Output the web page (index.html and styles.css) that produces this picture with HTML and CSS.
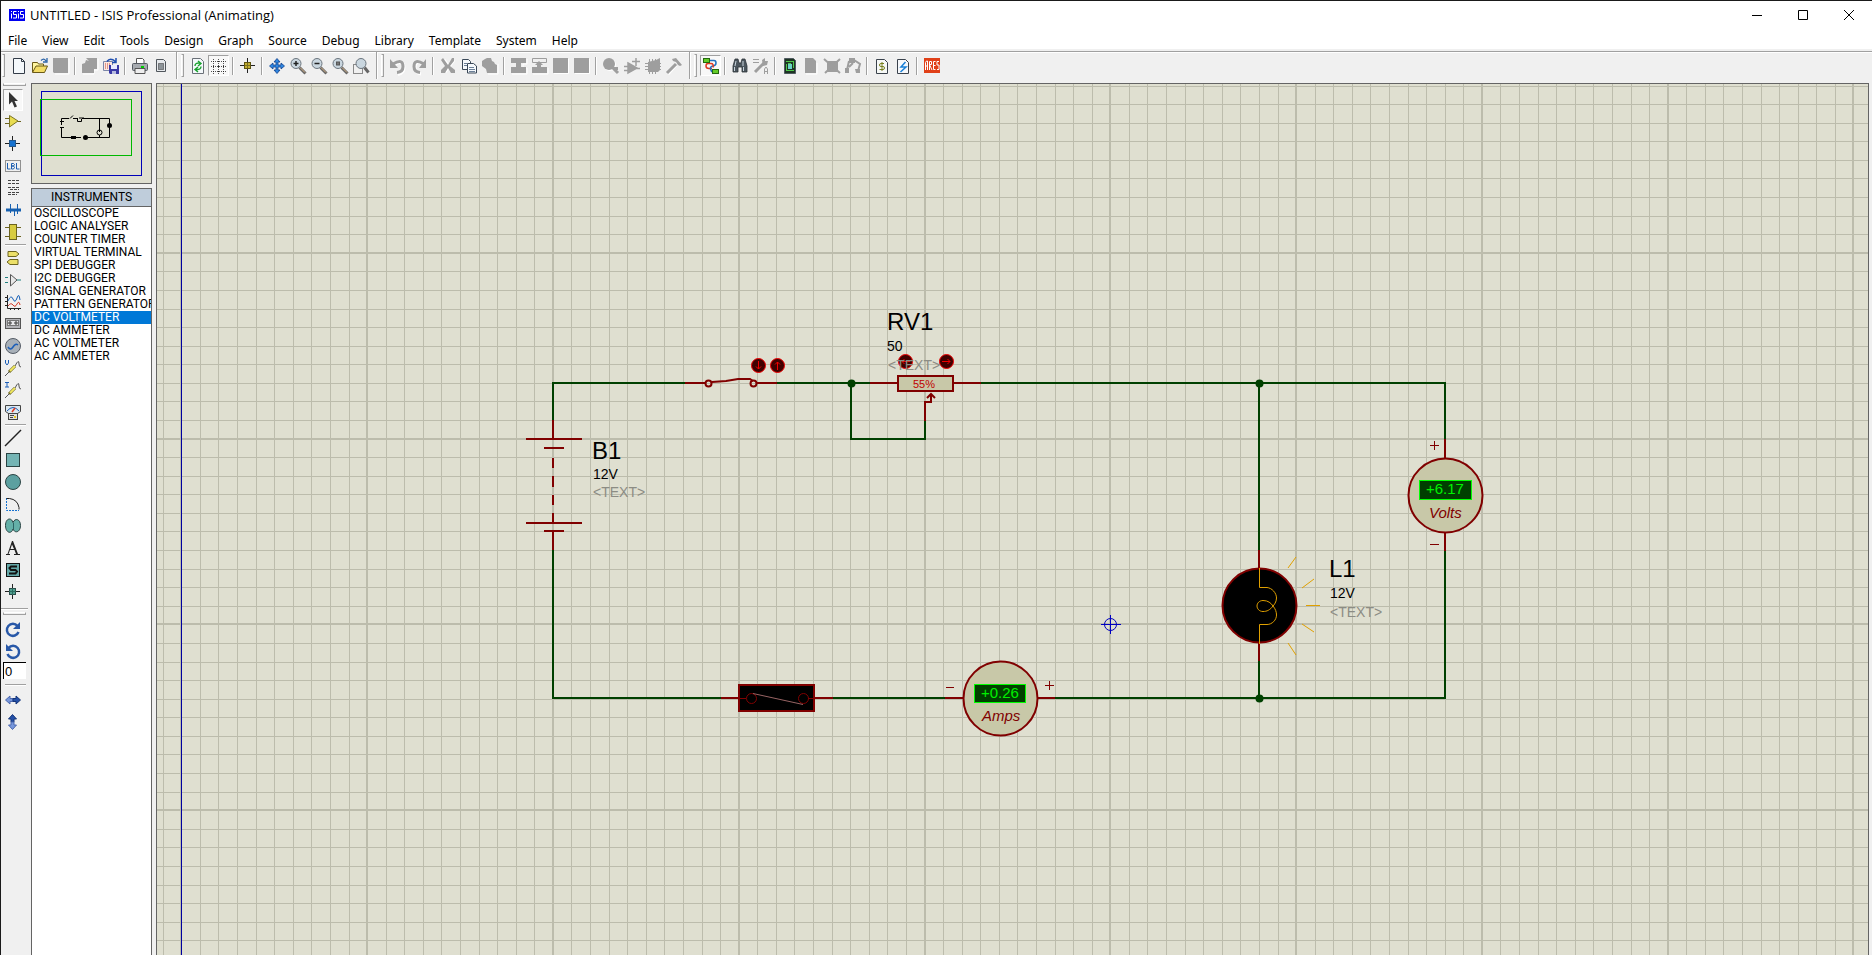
FILE: index.html
```html
<!DOCTYPE html>
<html lang="en">
<head>
<meta charset="utf-8">
<title>UNTITLED - ISIS Professional (Animating)</title>
<link rel="stylesheet" href="styles.css">
</head>
<body>
<div class="window">
<header class="titlebar">
  <svg class="app-icon" width="16" height="12" viewBox="0 0 16 12" aria-hidden="true"><rect width="16" height="12" fill="#0000f0"/><path d="M2.500 2v1M2.500 4.500v5M7.500 2.500H4.500v3h3v3.500H4M9.500 2v1M9.500 4.500v5M14.500 2.500H11.500v3h3v3.500H11" stroke="#fff" fill="none"/></svg>
  <h1 class="title">UNTITLED - ISIS Professional (Animating)</h1>
  <div class="win-controls">
    <button aria-label="Minimize"><svg width="12" height="12"><path d="M1 6.500h10" stroke="#000"/></svg></button>
    <button aria-label="Maximize"><svg width="12" height="12"><path d="M1.500 1.500h9v9h-9z" stroke="#000" fill="none"/></svg></button>
    <button aria-label="Close"><svg width="12" height="12"><path d="M1 1l10 10M11 1L1 11" stroke="#000"/></svg></button>
  </div>
</header>
<nav class="menubar">
  <button>File</button><button>View</button><button>Edit</button><button>Tools</button><button>Design</button><button>Graph</button><button>Source</button><button>Debug</button><button>Library</button><button>Template</button><button>System</button><button>Help</button>
</nav>
<div class="toolbar" role="toolbar" aria-label="Main">
  <span class="grip"></span>
  <button aria-label="New"><svg viewBox="0 0 16 16"><path d="M2.500.5h8l3 3v12h-11z" fill="#f4f8fb" stroke="#333c48"/><path d="M10.500.5v3h3" fill="none" stroke="#333c48"/></svg></button>
  <button aria-label="Open"><svg viewBox="0 0 16 16"><path d="M.5 14V4.500h5l1 1.500h5v2" fill="#fff6a0" stroke="#6b5a18"/><path d="M.5 14.500L4 8h11.500l-3 6.500z" fill="#f3dc66" stroke="#6b5a18"/><path d="M9 2.500q3-3 5 .5M15 0v4h-4" fill="none" stroke="#2c64a8" stroke-width="1.300"/></svg></button>
  <button aria-label="Save" disabled><svg viewBox="0 0 16 16"><path d="M16 1v15H2" stroke="#fff" fill="none"/><path d="M0 0h15v15H1L0 14z" fill="#9e9e9e"/></svg></button>
  <span class="sep"></span>
  <button aria-label="Import section" disabled><svg viewBox="0 0 16 16"><path d="M16 1v11h-4v4H1" fill="none" stroke="#fff"/><path d="M4 0h11v11h-3v4H0V6l3-1 1-3 3 1z" fill="#9e9e9e"/></svg></button>
  <button aria-label="Export section"><svg viewBox="0 0 16 16"><path d="M.5 3.500h9v9h-9z" fill="#fde8e0" stroke="#7c86a8"/><path d="M2 6h6M2 8h6M2 10h6" stroke="#c44634" stroke-dasharray="1 1"/><path d="M4 3.500Q7-1 12.500 3.500M13 0v4.500H9" fill="none" stroke="#1f4fb0" stroke-width="1.500"/><path d="M6 7h10v9H7l-1-1z" fill="#3a39a6"/><path d="M8 7h6v4H8z" fill="#e8ecff"/><path d="M9 13h4v3H9z" fill="#b8bce0"/></svg></button>
  <span class="sep"></span>
  <button aria-label="Print"><svg viewBox="0 0 16 16"><path d="M4.500 6V.5h6l1.500 1.500v4" fill="#fff" stroke="#555"/><rect x=".5" y="5.500" width="15" height="7" rx="1" fill="#a7abb0" stroke="#555b62"/><path d="M3 10.500h10v5H3z" fill="#eee" stroke="#555"/><path d="M9 8h3v2H9z" fill="#0c0"/></svg></button>
  <button aria-label="Print area"><svg viewBox="0 0 16 16"><path d="M3.500 1.500h7l2 2v10h-9z" fill="#e6e9ec" stroke="#50565c"/><rect x="5.500" y="5.500" width="5" height="6" fill="#8d9499" stroke="#333" stroke-dasharray="1 1"/></svg></button>
  <span class="rule"></span><span class="grip"></span>
  <button aria-label="Redraw"><svg viewBox="0 0 16 16"><path d="M2.500.5h8l3 3v12h-11z" fill="#f4f8fb" stroke="#6a7078"/><path d="M5 8q0-3.500 5-3M8 3l3 2.500L8 8M11 8.500q0 3.500-5 3M8 9l-3 2.500L8 14" fill="none" stroke="#17a02c" stroke-width="1.400"/></svg></button>
  <button class="pressed" aria-label="Toggle grid" aria-pressed="true"><svg viewBox="0 0 16 16"><path d="M2.500 1v15M7.500 1v15M12.500 1v15M0 3.500h16M0 8.500h16M0 13.500h16" stroke="#555" stroke-dasharray="1 1"/><path d="M2 3.500h1M7 3.500h1M12 3.500h1M2 8.500h1M7 8.500h1M12 8.500h1M2 13.500h1M7 13.500h1M12 13.500h1" stroke="#222"/></svg></button>
  <span class="sep"></span>
  <button aria-label="Origin"><svg viewBox="0 0 16 16"><path d="M7.500 0v15M0 7.500h15" stroke="#222"/><rect x="4.500" y="4.500" width="6" height="6" fill="#c4b030" stroke="#5e5410"/><path d="M7.500 5v5M5 7.500h5" stroke="#7c7020"/></svg></button>
  <span class="sep"></span>
  <button aria-label="Pan"><svg viewBox="0 0 16 16"><path d="M8 .5l3 3.500H9v3h3V5l3.500 3-3.500 3V9H9v3h2l-3 3.500L5 12h2V9H4v2L.5 8 4 5v2h3V4H5z" fill="#2f86e0" stroke="#10408c" stroke-width=".8"/></svg></button>
  <button aria-label="Zoom in"><svg viewBox="0 0 16 16"><path d="M9.500 9.500l6 6" stroke="#666" stroke-width="3"/><path d="M10 9.500l5 5" stroke="#d8b488"/><circle cx="6" cy="5.500" r="5" fill="#c9d6df" stroke="#6b757e"/><path d="M3.500 5.500h5M6 3v5" stroke="#222" stroke-width="1.500"/></svg></button>
  <button aria-label="Zoom out"><svg viewBox="0 0 16 16"><path d="M9.500 9.500l6 6" stroke="#666" stroke-width="3"/><path d="M10 9.500l5 5" stroke="#d8b488"/><circle cx="6" cy="5.500" r="5" fill="#c9d6df" stroke="#6b757e"/><path d="M3.500 5.500h5" stroke="#222" stroke-width="1.500"/></svg></button>
  <button aria-label="Zoom all"><svg viewBox="0 0 16 16"><path d="M9.500 9.500l6 6" stroke="#666" stroke-width="3"/><path d="M10 9.500l5 5" stroke="#d8b488"/><circle cx="6" cy="5.500" r="5" fill="#c9d6df" stroke="#6b757e"/><rect x="4.500" y="4" width="3" height="3" fill="#777" stroke="#555"/></svg></button>
  <button aria-label="Zoom area"><svg viewBox="0 0 16 16"><path d="M.5 6.500v9h9v-9z" fill="none" stroke="#222" stroke-dasharray="1 1"/><path d="M11.500 9.500l4 5" stroke="#666" stroke-width="3"/><circle cx="8" cy="5.500" r="5" fill="#c9d6df" stroke="#6b757e"/></svg></button>
  <span class="rule"></span><span class="grip"></span>
  <button aria-label="Undo" disabled><svg viewBox="0 0 16 16"><path d="M3 6q10-6 10 2.500Q13 14 7 15.500" fill="none" stroke="#fff" stroke-width="3" transform="translate(1 1)"/><path d="M3 6q10-6 10 2.500Q13 14 7 14.500" fill="none" stroke="#9e9e9e" stroke-width="3"/><path d="M0 1v9h8z" fill="#9e9e9e"/></svg></button>
  <button aria-label="Redo" disabled><svg viewBox="0 0 16 16"><path d="M13 6Q3 0 3 8.500 3 14 9 15" fill="none" stroke="#fff" stroke-width="3" transform="translate(1 1)"/><path d="M13 6Q3 0 3 8.500 3 14 9 14.500" fill="none" stroke="#9e9e9e" stroke-width="3"/><path d="M15 1v9H8z" fill="#9e9e9e"/></svg></button>
  <span class="sep"></span>
  <button aria-label="Cut" disabled><svg viewBox="0 0 16 16"><path d="M4 2l9 12M14 2L5 14" stroke="#fff" stroke-width="3"/><path d="M3 0l5 7 4-7h2v3l-4 5 5 4v3h-4l-3-5-3 5H1v-3l4-4-4-6z" fill="#9e9e9e"/></svg></button>
  <button aria-label="Copy"><svg viewBox="0 0 16 16"><path d="M1.500 1.500h6l2 2v8h-8z" fill="#f6f9fc" stroke="#3a4858"/><path d="M6.500 5.500h6l3 2.500v7h-9z" fill="#f6f9fc" stroke="#3a4858"/><path d="M3 5.500h3M3 7.500h3M8 9.500h5M8 11.500h6M8 13.500h6" stroke="#6c8098"/></svg></button>
  <button aria-label="Paste" disabled><svg viewBox="0 0 16 16"><path d="M16 6v10H6" fill="none" stroke="#fff"/><path d="M0 3l3-2 2-1h4l1 3 2 1 1 2 2 1v8H5l-1-4-4-3z" fill="#9e9e9e"/></svg></button>
  <span class="sep"></span>
  <button aria-label="Block copy" disabled><svg viewBox="0 0 16 16"><path d="M16 1v5h-4v4h4v6H1" fill="none" stroke="#fff"/><path d="M0 0h15v5h-5v4h5v6H0V9h5V5H0z" fill="#9e9e9e"/></svg></button>
  <button aria-label="Block move" disabled><svg viewBox="0 0 16 16"><path d="M16 10v6H1" fill="none" stroke="#fff"/><path d="M.5.5h14v4H.5z" fill="none" stroke="#9e9e9e"/><path d="M7 3l4 4H9v2h6v6H0V9h5V7H3z" fill="#9e9e9e"/></svg></button>
  <button aria-label="Block rotate" disabled><svg viewBox="0 0 16 16"><path d="M15.500 1v14.500H1" fill="none" stroke="#fff"/><path d="M0 0h15v15H0z" fill="#9e9e9e"/></svg></button>
  <button aria-label="Block delete" disabled><svg viewBox="0 0 16 16"><path d="M15.500 1v14.500H1" fill="none" stroke="#fff"/><path d="M0 0h15v15H0z" fill="#9e9e9e"/></svg></button>
  <span class="sep"></span>
  <button aria-label="Pick parts" disabled><svg viewBox="0 0 16 16"><circle cx="7" cy="7" r="6" fill="#fff"/><circle cx="6" cy="6" r="6" fill="#9e9e9e"/><path d="M9 9l6 6M11 10.500h4" stroke="#9e9e9e" stroke-width="3"/></svg></button>
  <button aria-label="Make device" disabled><svg viewBox="0 0 16 16"><path d="M4 5l9 5-9 5zM0 8.500h4M0 12.500h4M11 10.500h5M8 3.500h8M12 0v8" fill="#9e9e9e" stroke="#9e9e9e" stroke-width="1.500"/></svg></button>
  <button aria-label="Packaging tool" disabled><svg viewBox="0 0 16 16"><path d="M3 4l8-2 4-2v12l-2 2H3z" fill="#9e9e9e"/><path d="M0 5.500h16M0 8.500h16M0 11.500h16M4.500 1v15M7.500 1v15M10.500 1v15" stroke="#9e9e9e"/></svg></button>
  <button aria-label="Decompose" disabled><svg viewBox="0 0 16 16"><path d="M1 15L9 6" stroke="#fff" stroke-width="3" transform="translate(1 1)"/><path d="M1 15L10 6" stroke="#9e9e9e" stroke-width="3"/><path d="M6 1l4-1 6 7-2 1-2-1-2-3-3-1z" fill="#9e9e9e"/></svg></button>
  <span class="rule"></span><span class="grip"></span>
  <button class="pressed" aria-label="Wire autorouter" aria-pressed="true"><svg viewBox="0 0 16 16"><path d="M8 5.500H5q-2 0-2 2.500t3 2.500h3" fill="none" stroke="#e03820" stroke-width="1.500"/><path d="M7 2.500h4q2 0 2 2.500T10 8 7.500 11t2.500 3" fill="none" stroke="#2070c0" stroke-width="1.500"/><path d="M8 5.500q3 0 2 4" fill="none" stroke="#e03820" stroke-width="1.500"/><rect x=".5" y=".5" width="6" height="4" fill="#64cc28" stroke="#246810"/><rect x="9.500" y="11.500" width="6" height="4" fill="#64cc28" stroke="#246810"/></svg></button>
  <span class="sep"></span>
  <button aria-label="Search"><svg viewBox="0 0 16 16"><path d="M3 1h3l1 4h2l1-4h3l2 7v6h-5V9H6v5H1V8z" fill="#4c565e" stroke="#2c3238" stroke-width=".8"/><path d="M2.500 9v4M11.500 9v4M4 3L3 8M11 3v5" stroke="#c8d4dc"/></svg></button>
  <button aria-label="Property tool"><svg viewBox="0 0 16 16"><path d="M0 1.500h6M0 4.500h6" stroke="#9e9e9e"/><path d="M2 14L11 5" stroke="#9e9e9e" stroke-width="3"/><path d="M9 2l3-2v3h3l-1 4-4 1z" fill="#9e9e9e"/><path d="M11.500 16v-5l1.500-2 1.500 2v5M11.500 13.500h3" fill="none" stroke="#9e9e9e"/></svg></button>
  <span class="sep"></span>
  <button aria-label="New sheet"><svg viewBox="0 0 16 16"><path d="M2.500.5h9l2 2v13h-11z" fill="#1d3424" stroke="#505a60"/><path d="M4 3.500h8M4 12.500h8M4.500 6v6M11.500 4v6M6 5.500h3" stroke="#50c84c"/><rect x="6" y="6" width="4" height="5" fill="#6bd4c8"/></svg></button>
  <button aria-label="Remove sheet" disabled><svg viewBox="0 0 16 16"><path d="M14 5v11H3" fill="none" stroke="#fff"/><path d="M2 0h8l3 3v12H2z" fill="#9e9e9e"/></svg></button>
  <button aria-label="Parent sheet" disabled><svg viewBox="0 0 16 16"><path d="M3 3h11v11H3z" fill="#9e9e9e"/><path d="M0 1l16 14M16 1L1 15" stroke="#9e9e9e" stroke-width="2"/></svg></button>
  <button aria-label="Child sheet" disabled><svg viewBox="0 0 16 16"><path d="M4 0h6v5H4zM0 10h4v5H0zM10 11h5v4h-4z" fill="#9e9e9e"/><path d="M4 3L2 12M9 2l6 4-2 7M8 5L4 9" fill="none" stroke="#9e9e9e" stroke-width="2"/></svg></button>
  <span class="sep"></span>
  <button aria-label="Bill of materials"><svg viewBox="0 0 16 16"><path d="M2.500 1.500h8l3 3v11h-11z" fill="#f6f8f6" stroke="#3a424c"/><path d="M10 5.500H7q-1.500 0-1.500 1.500T7 8.500h2q1.500 0 1.500 1.500T9 11.500H5.500M8 4v9" fill="none" stroke="#788020"/></svg></button>
  <button aria-label="Electrical check"><svg viewBox="0 0 16 16"><path d="M2.500 1.500h8l3 3v11h-11z" fill="#f6f8fb" stroke="#3a424c"/><path d="M10.500 4L6 9h5l-5.500 5" fill="none" stroke="#1a80d8" stroke-width="1.500"/></svg></button>
  <span class="sep"></span>
  <button aria-label="ARES"><svg viewBox="0 0 16 16"><rect width="16" height="15" fill="#e04018"/><path d="M1.500 12V4.500L2.500 3h1v9M2 8h2M5.500 12V3.500h2v3h-2L8 12M11.500 3.500h-2V11.500h2M9.500 7.500h2M15 3.500h-2v3.500h2v4.500h-2" stroke="#fff" fill="none"/></svg></button>
</div>
<main class="workspace">
  <aside class="modes" role="toolbar" aria-label="Modes">
    <span class="hgrip"></span>
    <button class="pressed" aria-label="Selection mode" aria-pressed="true"><svg viewBox="0 0 16 16"><path d="M4 0v12.500l3-3 2.500 6 2.500-1-2.500-5.500H13z" fill="#333"/></svg></button>
    <button aria-label="Component mode"><svg viewBox="0 0 16 16"><path d="M0 4.500h4M0 9.500h4M12 7.500h4" stroke="#6c6420"/><path d="M4.500 1.500L13 7l-8.500 6z" fill="#e8dc50" stroke="#7c7424"/></svg></button>
    <button aria-label="Junction mode"><svg viewBox="0 0 16 16"><path d="M7.500 0v15M0 7.500h15" stroke="#222"/><rect x="4.500" y="4.500" width="6" height="6" fill="#1672d0" stroke="#24588c"/></svg></button>
    <button aria-label="Label mode"><svg viewBox="0 0 16 16"><rect x=".5" y="2.500" width="15" height="11" fill="none" stroke="#333" stroke-dasharray="1 1"/><path d="M2.500 5v6h3M6.500 5.500v5.500h2l1-1.500-1-1.500h-2 2l1-1.500-1-1h-2M11.500 5v6h3" stroke="#1c5eb0" fill="none"/></svg></button>
    <button aria-label="Script mode"><svg viewBox="0 0 16 16"><path d="M3 .5h11M3 3.500h11M3 7.500h11M5 9.500h9M3 12.500h11M3 14.500h9" stroke="#444" stroke-dasharray="3 1"/></svg></button>
    <button aria-label="Bus mode"><svg viewBox="0 0 16 16"><path d="M1 8h15" stroke="#1660b0" stroke-width="3"/><path d="M5.500 2v6M9.500 8v6M12.500 2v10M5.500 8v3" stroke="#1660b0"/></svg></button>
    <button aria-label="Subcircuit mode"><svg viewBox="0 0 16 16"><path d="M0 3.500h5M0 12.500h5M11 3.500h5M11 12.500h5" stroke="#6c6420"/><rect x="4.500" y=".5" width="7" height="15" fill="#d8cc40" stroke="#6c6420"/></svg></button>
    <span class="hsep"></span>
    <button aria-label="Terminals mode"><svg viewBox="0 0 16 16"><path d="M3 1.500h8L14 4l-3 2.500H3z" fill="#ece068" stroke="#6c6420"/><path d="M13 9.500H5L2 12l3 2.500h8z" fill="#ece068" stroke="#6c6420"/></svg></button>
    <button aria-label="Device pins mode"><svg viewBox="0 0 16 16"><path d="M0 5.500h3M0 10.500h3M12 8h4" stroke="#208080"/><path d="M5.500 2.500L12 8l-6.500 6z" fill="#e8e8e8" stroke="#555"/></svg></button>
    <button aria-label="Graph mode"><svg viewBox="0 0 16 16"><path d="M2.500 1v13.500H16M0 3.500h2M0 7.500h2M0 11.500h2M5.500 14v2M9.500 14v2M13.500 14v2" stroke="#222" fill="none"/><path d="M3 7q3-7 5-2t4-1 3 2" fill="none" stroke="#1660b8"/><path d="M3 12q3-4 5-1t4-1 3 1" fill="none" stroke="#d03828"/></svg></button>
    <button aria-label="Tape recorder mode"><svg viewBox="0 0 16 16"><rect x=".5" y="2.500" width="15" height="10" fill="#b4b4b8" stroke="#555"/><rect x="2.500" y="4.500" width="11" height="5" fill="#e8e8ea" stroke="#777"/><path d="M4 6h2v2H4zM10 6h2v2h-2z" fill="#fff" stroke="#333"/></svg></button>
    <button aria-label="Generator mode"><svg viewBox="0 0 16 16"><circle cx="8" cy="8" r="7.500" fill="#a8b0b8" stroke="#555c66"/><path d="M3 9q2.500 4 5 0t5-2" fill="none" stroke="#1c5eb8" stroke-width="1.500"/></svg></button>
    <button aria-label="Voltage probe mode"><svg viewBox="0 0 16 16"><path d="M.5 0v3l1.500 2 1.500-2V0" stroke="#1c5eb8" fill="none"/><path d="M0 16l5-5" stroke="#555"/><path d="M4 12l6-6" stroke="#6c6420" stroke-width="3"/><path d="M5 11l5-5" stroke="#f0e860" stroke-width="2"/><path d="M10 6q4-8 4-2 0 3 2 3" fill="none" stroke="#555"/></svg></button>
    <button aria-label="Current probe mode"><svg viewBox="0 0 16 16"><path d="M0 .5h4M2 .5v4.500M0 5h4" stroke="#1c5eb8" fill="none"/><path d="M0 16l5-5" stroke="#555"/><path d="M4 12l6-6" stroke="#6c6420" stroke-width="3"/><path d="M5 11l5-5" stroke="#f0e860" stroke-width="2"/><path d="M10 6q4-8 4-2 0 3 2 3" fill="none" stroke="#555"/></svg></button>
    <button aria-label="Instruments mode"><svg viewBox="0 0 16 16"><path d="M.5 1.500h15v6l-3 2h-9l-3-2z" fill="#dce8f0" stroke="#444"/><path d="M2 7q6-7 12 0" fill="none" stroke="#1c5eb8"/><path d="M7 8l3-4" stroke="#e03820" stroke-width="1.500"/><rect x="3.500" y="9.500" width="9" height="6" fill="#e0e0e0" stroke="#444"/><path d="M5 11.500h4M5 13.500h3" stroke="#444"/><path d="M9 12h2v2H9z" fill="#e8c820"/></svg></button>
    <span class="hsep"></span>
    <button aria-label="Line"><svg viewBox="0 0 16 16"><path d="M0 16L16 0" stroke="#222" stroke-width="1.500"/></svg></button>
    <button aria-label="Box"><svg viewBox="0 0 16 16"><rect x="1.500" y="1.500" width="13" height="13" fill="#74b4b4" stroke="#2c4444"/></svg></button>
    <button aria-label="Circle"><svg viewBox="0 0 16 16"><circle cx="8" cy="8" r="7.500" fill="#5ca0a0" stroke="#2c4444"/></svg></button>
    <button aria-label="Arc"><svg viewBox="0 0 16 16"><path d="M1.500 2v12.500H14" fill="none" stroke="#1672d0" stroke-dasharray="2 1"/><path d="M1.500 2.500h3q8 1 9.500 9v2" fill="none" stroke="#222"/></svg></button>
    <button aria-label="Path"><svg viewBox="0 0 16 16"><path d="M8 4.500C6.500-1 .5 0 .5 7.500S6.500 16.500 8 11c2 5 7.500 3 7.500-3.500S10-.5 8 4.500z" fill="#64b0a8" stroke="#2c4444"/><path d="M8.500 5v6" stroke="#2c6464"/></svg></button>
    <button aria-label="Text"><svg viewBox="0 0 16 16"><path d="M7 1h1l5 13h2v1H9v-1h2l-1.500-4H5L3.500 14H5v1H1v-1h1.500zM7 4.500L5.500 9H9z" fill="#222"/></svg></button>
    <button aria-label="Symbol"><svg viewBox="0 0 16 16"><rect x="1.500" y="1.500" width="13" height="13" fill="#64a8a8" stroke="#111"/><path d="M12 4.500H6L4.500 6l1.500 2h4.500L12 9.500 10.500 11.500H4" fill="none" stroke="#111" stroke-width="2"/></svg></button>
    <button aria-label="Marker"><svg viewBox="0 0 16 16"><path d="M7.500 0v15M0 7.500h15" stroke="#222"/><rect x="4.500" y="4.500" width="6" height="6" fill="#50a090" stroke="#2c4c48"/><path d="M7.500 4v7M4 7.500h7" stroke="#2c6c60"/></svg></button>
    <span class="hrule"></span>
    <span class="hgrip"></span>
    <button aria-label="Rotate clockwise"><svg viewBox="0 0 16 16"><path d="M12.500 5A6 6 0 1 0 13.500 11" fill="none" stroke="#2858a8" stroke-width="2.500"/><path d="M15 1v7H8z" fill="#2858a8"/></svg></button>
    <button aria-label="Rotate anti-clockwise"><svg viewBox="0 0 16 16"><path d="M3.500 5A6 6 0 1 1 2.500 11" fill="none" stroke="#2858a8" stroke-width="2.500"/><path d="M1 1v7h7z" fill="#2858a8"/></svg></button>
    <input class="angle" type="text" value="0" aria-label="Rotation angle">
    <span class="hsep"></span>
    <button aria-label="Mirror horizontally"><svg viewBox="0 0 16 16"><path d="M8 6.500H5V4L.5 8 5 12V9.500h3z" fill="#7898dc" stroke="#4c68b0"/><path d="M8 6.500h3V4l4.500 4L11 12V9.500H8z" fill="#2450a8" stroke="#143478"/></svg></button>
    <button aria-label="Mirror vertically"><svg viewBox="0 0 16 16"><path d="M6 8V5H3.500L7.500.5l4 4.500H9v3z" fill="#2450a8" stroke="#143478"/><path d="M6 8v3H3.500l4 4.500 4-4.500H9V8z" fill="#7898dc" stroke="#4c68b0"/></svg></button>
  </aside>
  <section class="side">
    <div class="overview">
      <svg width="119" height="99" aria-label="Overview">
        <rect x="9.500" y="7.500" width="100" height="84" fill="none" stroke="#0000b8"/>
        <rect x="8.500" y="15.500" width="91" height="56" fill="none" stroke="#00b800"/>
        <path d="M29.500 41v-6.500H37M41 34.500h5M50 34.500h27.500v19H56M49 53.500h-5M40 53.500H29.500V44M67.500 34v14M67.500 51v2M28 37.500h4M28 43.500h4" fill="none" stroke="#000"/>
        <path d="M38 34.500l3-3M45.500 35v2.500h4V35M47 34h5" fill="none" stroke="#000"/>
        <circle cx="53.500" cy="53.500" r="2.500"/><circle cx="77.500" cy="41.500" r="2.500"/>
        <circle cx="67.500" cy="48.500" r="2.500" fill="none" stroke="#000"/><path d="M39 52h5v3h-5z"/>
      </svg>
    </div>
    <div class="picker">
      <h2 class="picker-head">INSTRUMENTS</h2>
      <ul class="picker-list">
        <li><button>OSCILLOSCOPE</button></li>
        <li><button>LOGIC ANALYSER</button></li>
        <li><button>COUNTER TIMER</button></li>
        <li><button>VIRTUAL TERMINAL</button></li>
        <li><button>SPI DEBUGGER</button></li>
        <li><button>I2C DEBUGGER</button></li>
        <li><button>SIGNAL GENERATOR</button></li>
        <li><button>PATTERN GENERATOR</button></li>
        <li><button class="selected" aria-pressed="true">DC VOLTMETER</button></li>
        <li><button>DC AMMETER</button></li>
        <li><button>AC VOLTMETER</button></li>
        <li><button>AC AMMETER</button></li>
      </ul>
    </div>
  </section>
  <section class="canvas">
    <svg class="sheet" id="sheet" aria-label="Schematic">
      <path id="grid-minor" class="grid"/>
      <path id="grid-major" class="grid grid-major"/>
      <g transform="translate(-157 -84)">
        <path d="M181.500 84V2000" stroke="#0000a0"/>
        <g class="wire">
          <path d="M553 421V383H685M777 383H870M851 383V439H925V421M981 383H1445V439M1259 383V550M1259 661V698M553 549V698H721M833 698H945M1055 698H1445V550"/>
          <g class="node"><circle cx="851.500" cy="383.500" r="4"/><circle cx="1259.500" cy="383.500" r="4"/><circle cx="1259.500" cy="698.500" r="4"/></g>
        </g>
        <g class="part">
          <path d="M553 420V439M526 439H582M544 448H564M553 458v10M553 476v11M553 495v10M553 513v10M526 523H582M544 531H564M553 531V550"/>
          <path d="M685 383H705M712 382L726 381 738 379H750L753 381M757 383H777"/>
          <circle cx="708.500" cy="383.500" r="3"/><circle cx="753.500" cy="383.500" r="3"/>
          <path d="M870 383H897M954 383H981M925 421V402H931V394M927 398L931 394 935 398"/>
          <rect x="898" y="376" width="55" height="15" class="body"/>
          <path d="M721 698H738M815 698H833M945 698H963M1038 698H1055M1259 550V568M1259 643V661M1445 439V458M1445 533V551"/>
          <rect x="739" y="685" width="75" height="26" fill="#000"/>
          <circle cx="1000.500" cy="698.500" r="37" class="body"/>
          <circle cx="1445.500" cy="495.500" r="37" class="body"/>
          <circle cx="1259.500" cy="605.500" r="37" fill="#000"/>
        </g>
        <g class="thin">
          <circle cx="751.500" cy="698.500" r="5"/><circle cx="803.500" cy="698.500" r="5"/>
          <path d="M739 698.500h7M808 698.500h7M946 687.500h8M1045 685.500h9M1049.500 681v9M1430 445.500h9M1434.500 441v9M1430 544.500h9"/>
          <path d="M753 693.500L803 704.500" stroke="#986464"/>
        </g>
        <g class="glow">
          <path d="M1259.500 568V587.500H1267C1272 588 1276.500 593 1276.500 598C1276.500 602 1274 605 1273 606C1270 610 1267 611.500 1263 611.500C1259 611.500 1257 608.500 1257 606C1257 603 1259.500 600.500 1263 600.500C1268 600.500 1271 603 1273 606C1275.500 609 1276.500 612 1276.500 615C1276.500 620 1272 624.500 1267 624.500H1259.500V644"/>
          <path d="M1288 568L1296 557M1302 588L1314 579M1306 605.500H1320M1302 624L1314 632M1288 643L1296 655"/>
        </g>
        <g class="actuator">
          <circle cx="758.500" cy="365.500" r="7"/><circle cx="777.500" cy="365.500" r="7"/><circle cx="905.500" cy="361.500" r="7"/><circle cx="946.500" cy="361.500" r="7"/>
          <path d="M758.500 361v8M756 366.500l2.500 2.500 2.500-2.500M777.500 370v-8M775 364.500l2.500-2.500 2.500 2.500M910 361.500h-8M904.500 359l-2.500 2.500 2.500 2.500M942 361.500h8M947.500 359l2.500 2.500-2.500 2.500"/>
        </g>
        <g class="display"><rect x="974.500" y="684.500" width="51" height="18"/><rect x="1419.500" y="480.500" width="52" height="19"/></g>
        <g class="origin"><circle cx="1110.500" cy="624.500" r="6"/><path d="M1101 624.500h20M1110.500 615v19"/></g>
        <g class="ref"><text x="592" y="459">B1</text><text x="887" y="330">RV1</text><text x="1329" y="577">L1</text></g>
        <g class="value"><text x="593" y="479">12V</text><text x="887" y="351">50</text><text x="1330" y="598">12V</text></g>
        <g class="note"><text x="593" y="497">&lt;TEXT&gt;</text><text x="888" y="370">&lt;TEXT&gt;</text><text x="1330" y="617">&lt;TEXT&gt;</text></g>
        <g class="reading"><text x="981" y="698">+0.26</text><text x="1426" y="494">+6.17</text></g>
        <g class="unit"><text x="982" y="721">Amps</text><text x="1429" y="518">Volts</text></g>
        <text class="percent" x="913" y="388">55%</text>
      </g>
    </svg>
  </section>
</main>
</div>
<script src="grid.js"></script>
</body>
</html>
```
FILE: styles.css
```css
* { box-sizing: border-box; }
body { margin: 0; font-family: "Noto Sans", "Open Sans", sans-serif; font-size: 13px; color: #000; background: #f0f0f0; }
button { border: 0; padding: 0; margin: 0; background: none; font: inherit; color: inherit; }
svg { display: block; }
.window { height: 100vh; display: flex; flex-direction: column; overflow: hidden; border-top: 1px solid #1a1a1a; border-left: 1px solid #1a1a1a; }
.titlebar { flex: none; height: 28px; display: flex; align-items: center; padding-left: 8px; background: #fff; }
.title { flex: 1; margin: 0 0 0 5px; font-family: "Open Sans", "Noto Sans", sans-serif; font-size: 13px; line-height: 18px; font-weight: 400; }
.win-controls { display: flex; }
.win-controls button { width: 46px; height: 28px; display: flex; align-items: center; justify-content: center; }
.menubar { flex: none; height: 20px; display: flex; align-items: center; gap: 15px; padding: 4px 0 0 7px; background: #fff; font-size: 12px; line-height: 16px; margin-bottom: 2px; }
.toolbar { flex: none; height: 32px; display: flex; align-items: center; padding: 0 0 4px 1px; border-top: 1px solid #a0a0a0; box-shadow: inset 0 1px #fff; }
.toolbar button { flex: none; width: 21px; height: 21px; display: flex; align-items: center; justify-content: center; }
.toolbar svg, .modes svg { flex: none; width: 16px; height: 16px; overflow: visible; }
.grip { flex: none; width: 3px; height: 23px; margin-right: 3px; border: 1px solid #a0a0a0; border-left-color: #fff; }
.sep { flex: none; width: 2px; height: 18px; margin: 0 3px; border-left: 1px solid #a0a0a0; border-right: 1px solid #fff; }
.rule { flex: none; width: 2px; height: 27px; margin: 0 3px 0 5px; border-left: 1px solid #a0a0a0; border-right: 1px solid #fff; }
.pressed { background: #f8f8f8; border: 1px solid #a0a0a0; border-right-color: #fff; border-bottom-color: #fff; }
.workspace { flex: 1; min-height: 0; display: flex; }
.modes { flex: none; width: 30px; display: flex; flex-direction: column; padding-left: 2px; }
.modes button { flex: none; width: 20px; height: 22px; display: flex; align-items: center; justify-content: center; }
.hgrip { flex: none; width: 23px; height: 3px; margin: 0 0 3px; border: 1px solid #a0a0a0; border-top-color: #fff; }
.hsep { flex: none; width: 21px; height: 2px; margin: 1px 2px; border-top: 1px solid #a0a0a0; border-bottom: 1px solid #fff; }
.hrule { flex: none; width: 27px; height: 2px; margin: 5px 0 2px -2px; border-top: 1px solid #a0a0a0; border-bottom: 1px solid #fff; }
.angle { flex: none; width: 23px; height: 17px; margin-bottom: 4px; padding: 0 1px; border: 0; border-top: 1px solid #000; border-left: 1px solid #000; background: #fff; font: 13px "Liberation Sans", sans-serif; }
.angle + .hsep { margin-bottom: 3px; }
.side { flex: none; width: 121px; margin-right: 4px; display: flex; flex-direction: column; gap: 4px; }
.overview { flex: none; background: #dfdfd0; border: 1px solid #646464; }
.picker { flex: 1; min-height: 0; display: flex; flex-direction: column; background: #fff; border: 1px solid #646464; border-bottom: 0; font: 12px/13px Roboto, sans-serif; }
.picker-head { margin: 0; height: 18px; line-height: 17px; font-size: 12px; font-weight: 400; text-align: center; background: #bfcddb; border-bottom: 1px solid #646464; }
.picker-list { margin: 0; padding: 0; list-style: none; overflow: hidden; }
.picker-list button { display: block; width: 100%; height: 13px; padding-left: 2px; text-align: left; white-space: nowrap; }
.picker-list .selected { background: #0078d7; color: #fff; }
.canvas { flex: 1; min-width: 0; margin-right: 3px; border: 1px solid #646464; border-bottom: 0; background: #dfdfd0; }
.sheet { width: 100%; height: 100%; }
.grid { fill: none; stroke: #bcbcac; stroke-width: 1; }
.grid-major { stroke-width: 2; }
.wire { fill: none; stroke: #004000; stroke-width: 2; }
.node { fill: #004000; stroke: none; }
.part { fill: none; stroke: #800000; stroke-width: 2; }
.part .body { fill: #c8c8a8; }
.thin { fill: none; stroke: #800000; }
.glow { fill: none; stroke: #e0a000; }
.actuator { fill: #400000; stroke: #f00000; }
.actuator path { fill: none; }
.display { fill: #004000; stroke: #00ff00; }
.origin { fill: none; stroke: #0000c0; }
.sheet text { font-family: "Liberation Sans", Arial, sans-serif; }
.ref { font-size: 24px; }
.value { font-size: 14px; }
.note { font-size: 14px; fill: #8c8c84; }
.reading { font-size: 15px; fill: #00f000; }
.unit { font-size: 15px; font-style: italic; fill: #800000; }
.percent { font-size: 11px; fill: #c00000; }
```
FILE: grid.js
```js
(function () {
  var sheet = document.getElementById('sheet');
  var pitch = 18.58;
  var firstX = 24.300, firstY = -17;
  function draw() {
    var box = sheet.getBoundingClientRect();
    var minor = '', major = '';
    for (var i = 0, x; (x = Math.round(firstX - pitch + i * pitch)) < box.width; i++) {
      if (x < 0) continue;
      if (i % 10 === 1) major += 'M' + x + ' 0V' + box.height;
      else minor += 'M' + (x + 0.5) + ' 0V' + box.height;
    }
    for (var j = 0, y; (y = Math.round(firstY + j * pitch)) < box.height; j++) {
      if (y < 0) continue;
      if (j % 10 === 0) major += 'M0 ' + y + 'H' + box.width;
      else minor += 'M0 ' + (y + 0.5) + 'H' + box.width;
    }
    document.getElementById('grid-minor').setAttribute('d', minor);
    document.getElementById('grid-major').setAttribute('d', major);
  }
  draw();
  window.addEventListener('resize', draw);
})();
```
